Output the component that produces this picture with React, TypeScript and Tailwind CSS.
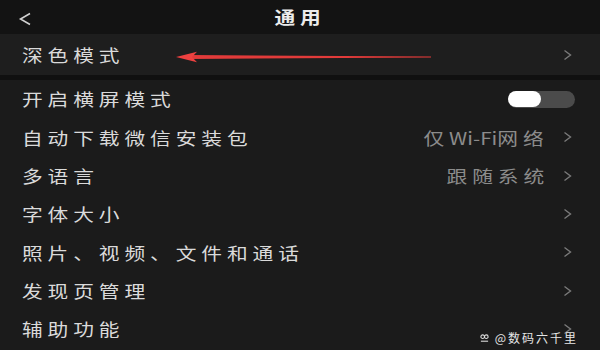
const rows: { label: string; value?: React.ReactNode; toggle?: boolean }[] = [
  { label: "开启横屏模式", toggle: true },
  {
    label: "自动下载微信安装包",
    value: (
      <>
        仅<span className="tracking-normal">Wi-Fi</span>网络
      </>
    ),
  },
  { label: "多语言", value: "跟随系统" },
  { label: "字体大小" },
  { label: "照片、视频、文件和通话" },
  { label: "发现页管理" },
  { label: "辅助功能" },
];

const font = "font-['Noto_Sans_CJK_SC','Noto_Sans',sans-serif]";

function Chevron() {
  return (
    <svg width="9" height="12" viewBox="0 0 9 12" className="shrink-0">
      <path d="M1.5 1.5 L7.5 6 L1.5 10.5" fill="none" stroke="#7a7a7a" strokeWidth="1.4" />
    </svg>
  );
}

// the screenshot is stretched horizontally, so glyphs are widened with scale-x
export default function App() {
  return (
    <div className={`relative h-[350px] w-[600px] overflow-hidden bg-[#1b1b1b] text-[#dadada] ${font}`}>
      {/* Header */}
      <header className="relative flex h-[34px] items-center justify-center bg-[#131313]">
        <svg className="absolute left-[18px] top-[12px]" width="14" height="14" viewBox="0 0 14 14">
          <path d="M12 1.5 L2.5 7 L12 12.5" fill="none" stroke="#d0d0d0" strokeWidth="1.6" />
        </svg>
        <span className="inline-block scale-x-[1.22] text-[17px] font-bold tracking-[4px] text-[#ececec]">通用</span>
      </header>

      {/* Dark mode */}
      <div className="relative flex h-[41px] items-center bg-[#1e1e1e] pl-[22px] pr-[28px]">
        <span className="inline-block origin-left scale-x-[1.22] text-[17px] tracking-[4px]">深色模式</span>
        <span className="ml-auto">
          <Chevron />
        </span>
        <svg className="absolute left-[175px] top-[16px]" width="258" height="14" viewBox="0 0 258 14">
          <path d="M14 5 L256 6.4 L256 7.4 L14 9 Z" fill="#e23b3a" />
          <path d="M1 7 L22 1.8 L17 7 L22 12.2 Z" fill="#ee4140" />
        </svg>
      </div>

      <div className="h-[5px] bg-[#101010]" />

      {/* Rows */}
      <div className="flex flex-col">
        {rows.map((r) => (
          <div key={r.label} className="flex h-[38.3px] items-center pl-[22px] pr-[28px]">
            <span className="inline-block origin-left scale-x-[1.22] whitespace-nowrap text-[17px] tracking-[4px]">
              {r.label}
            </span>
            <div className="ml-auto flex items-center gap-[14px]">
              {r.value && (
                <span className="inline-block origin-right scale-x-[1.22] whitespace-nowrap text-[17px] tracking-[4px] text-[#8c8c8c]">
                  {r.value}
                </span>
              )}
              {r.toggle ? (
                <div className="mr-[-3px] flex h-[17px] w-[67px] items-center rounded-full bg-[#4b4b4b]">
                  <div className="h-[16px] w-[33px] rounded-full bg-white" />
                </div>
              ) : (
                <Chevron />
              )}
            </div>
          </div>
        ))}
      </div>

      {/* Watermark */}
      <div className="absolute bottom-[3px] right-[22px] flex items-center gap-[6px] text-[12px] tracking-[2px] text-[#e6e6e6]">
        <svg width="9" height="9" viewBox="0 0 10 10">
          <circle cx="3" cy="3" r="2" fill="none" stroke="#ddd" strokeWidth="1.2" />
          <circle cx="7" cy="3" r="2" fill="none" stroke="#ddd" strokeWidth="1.2" />
          <path d="M1 8 L9 8" stroke="#ddd" strokeWidth="1.2" />
        </svg>
        <span>@数码六千里</span>
      </div>
    </div>
  );
}
